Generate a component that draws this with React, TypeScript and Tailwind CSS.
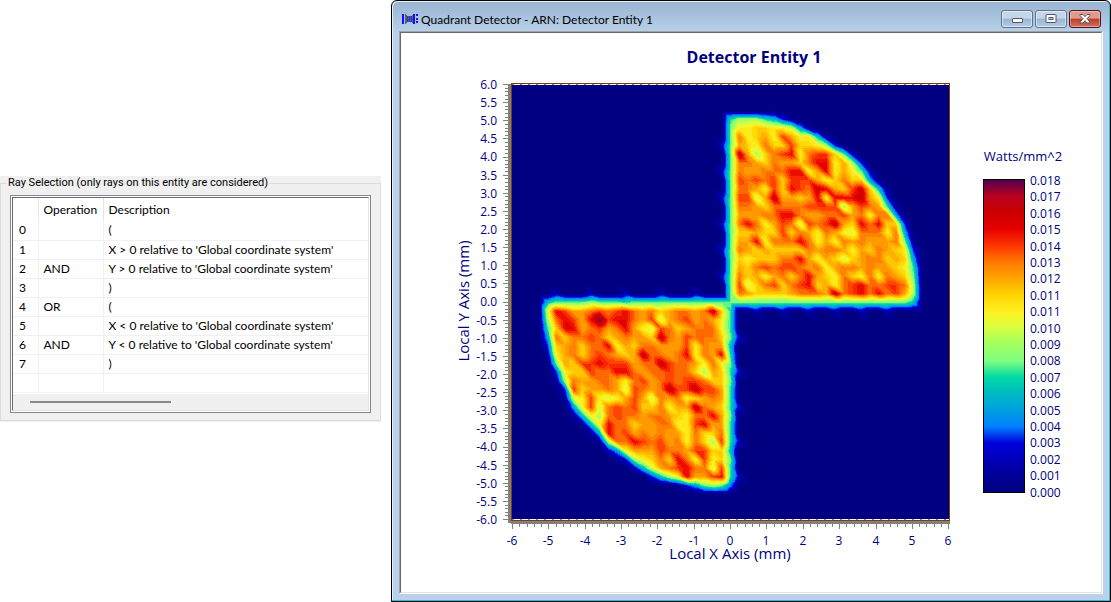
// Irradiance samples, one base-36 digit (0 to 19) per grid node.
// Rows run from the top edge of the quadrant down, columns left to right.
const UPPER_RIGHT = [
  "7999763100000000000000",
  "8bbccbba51000000000000",
  "8ebcdbfdbb610000000000",
  "8dcbeccfccb93000000000",
  "8hd9cefgbeffc820000000",
  "8eedceddceggbd93000000",
  "8eddeeeggbdgbdb8200000",
  "8fefefcfffdbcecc510000",
  "8eedbfcgfehgdcfhc61000",
  "8ffadhddcdgbggghdb3000",
  "8eedceeeeffff9dfed7100",
  "8dddeeggeddeefdebee500",
  "8egebdfeafefhdcgegcc30",
  "8ccdccfcedbedbaeeebe50",
  "8ddgbeeegebdbededdde81",
  "8edcdccccedeedbdcedcb3",
  "8cbccceegdbdcacdeecdc5",
  "8dcefeffedebdeededdcb7",
  "8ecdbdecegdcbecbebedc8",
  "8facefcefgcdbefgeeffe9",
  "8edccccdeeedhefgegefd9",
  "8888888888888888888886",
]

const LOWER_LEFT = [
  "6888898887888888888888",
  "agfddefefgedecdeedehc7",
  "9egfdgjfggedfadefdedb7",
  "7cggdefdegdbafecdeeeb7",
  "5eceefecdeddchedfeeec8",
  "3cdeceegbdceedddfbedd6",
  "1bdecefedcdheedegbedg7",
  "08dcffgfffdeehfeedbeb8",
  "03bccfeeggedeefeec9dc7",
  "019eddeedbefdefeffecc8",
  "003fcddedafedehffhffd7",
  "001abfbabdfdaedebcded7",
  "0005bfaefefccebddhedc7",
  "00016b9efeedeedcbeegd8",
  "000016bgeecddeebbfgdd7",
  "0000016gefdededdbecce7",
  "00000019eegfefdebec9f7",
  "000000025bdddfeedffcc6",
  "00000000139bcecgebfbc8",
  "000000000026adefgeeaf7",
  "000000000000369bgddfg7",
  "0000000000000001358984",
]

const PALETTE = [
  [0, 0, 128], [0, 0, 150], [0, 0, 184], [0, 0, 220], [0, 128, 255],
  [0, 160, 224], [0, 186, 196], [0, 216, 164], [128, 255, 128], [160, 255, 96],
  [216, 255, 64], [255, 240, 32], [255, 212, 0], [255, 164, 0], [255, 120, 0],
  [255, 52, 0], [230, 0, 0], [204, 0, 0], [184, 0, 32], [80, 0, 80],
]

const LEGEND_LABELS = [
  "0.018", "0.017", "0.016", "0.015", "0.014", "0.013", "0.012", "0.011", "0.011", "0.010",
  "0.009", "0.008", "0.007", "0.006", "0.005", "0.004", "0.003", "0.002", "0.001", "0.000",
]

const RAYS = [
  ["0", "", "("],
  ["1", "", "X > 0 relative to 'Global coordinate system'"],
  ["2", "AND", "Y > 0 relative to 'Global coordinate system'"],
  ["3", "", ")"],
  ["4", "OR", "("],
  ["5", "", "X < 0 relative to 'Global coordinate system'"],
  ["6", "AND", "Y < 0 relative to 'Global coordinate system'"],
  ["7", "", ")"],
  ["", "", ""],
]

// Plot rectangle inside the chart
const PLOT = { left: 111, top: 52, width: 437, height: 434 }
const CX = 329.6
const CY = 269.5
const NODE = 8.72
const BAND = 0.5

function color(value: number) {
  const v = Math.max(0, Math.min(19, value))
  const i = Math.min(18, Math.floor(v))
  const c = PALETTE[i].map((from, k) => Math.round(from + (PALETTE[i + 1][k] - from) * (v - i)))
  return `rgb(${c.join(",")})`
}

function sample(i: number, j: number) {
  if (i >= 0 && j >= 0) return parseInt(UPPER_RIGHT[21 - j]?.[i] ?? "0", 36)
  if (i <= 0 && j <= 0) return parseInt(LOWER_LEFT[-j]?.[21 + i] ?? "0", 36)
  // stray light just outside the straight edges
  if (i === -1 && j < 21) return j % 3 === 0 ? 2 : 0
  if (i === 1 && j > -21) return j % 4 === 0 ? 2 : 0
  if (j === -1 && i < 21) return i % 3 === 0 ? 2 : 0
  if (j === 1 && i > -21) return i % 4 === 0 ? 2 : 0
  return 0
}

type Node = [x: number, y: number, value: number]

// Part of the triangle that lies above the level
function clip(tri: Node[], level: number) {
  const out: string[] = []
  tri.forEach((a, n) => {
    const b = tri[(n + 1) % 3]
    if (a[2] >= level) out.push(`${a[0].toFixed(1)} ${a[1].toFixed(1)}`)
    if (a[2] >= level !== b[2] >= level) {
      const t = (level - a[2]) / (b[2] - a[2])
      out.push(`${(a[0] + (b[0] - a[0]) * t).toFixed(1)} ${(a[1] + (b[1] - a[1]) * t).toFixed(1)}`)
    }
  })
  return out.length > 2 ? `M${out.join("L")}Z` : ""
}

function buildBands() {
  const node = (i: number, j: number): Node => [CX + i * NODE, CY - j * NODE, sample(i, j)]
  const triangles: Node[][] = []
  for (let i = -23; i < 23; i++) {
    for (let j = -23; j < 23; j++) {
      const tl = node(i, j + 1)
      const br = node(i + 1, j)
      triangles.push([tl, node(i + 1, j + 1), br], [tl, br, node(i, j)])
    }
  }
  return Array.from({ length: 19 / BAND }, (_, n) => {
    const level = n === 0 ? 0.1 : n * BAND
    const d = triangles
      .filter((t) => Math.min(t[0][2], t[1][2], t[2][2]) < level + BAND)
      .map((t) => clip(t, level))
      .join("")
    return { d, fill: color(level + BAND / 2) }
  })
}

const BANDS = buildBands()

function range(count: number) {
  return Array.from({ length: count }, (_, i) => i)
}

function Chart() {
  const { left, top, width, height } = PLOT
  const right = left + width
  const bottom = top + height
  return (
    <svg viewBox="0 0 700 559" className="w-full" role="img" aria-label="Detector Entity 1" fill="#000080">
      <text x="353" y="30" textAnchor="middle" className="text-[16px] font-bold">Detector Entity 1</text>

      {/* Heat map */}
      <rect x={left} y={top} width={width} height={height} />
      <g shapeRendering="crispEdges">
        {BANDS.map((band, i) => (
          <path key={i} d={band.d} fill={band.fill} />
        ))}
      </g>
      <g shapeRendering="crispEdges" fill="none">
        <path d={`M${left} 51.5H${right}`} stroke="#fff" />
        <path d={`M${left} 51.5H${right}`} stroke="#808080" strokeDasharray="2 6" />
        <path d={`M${left} ${bottom + 0.5}H${right}`} stroke="#fff" />
        <path d={`M${left} ${bottom + 0.5}H${right}`} stroke="#808080" strokeDasharray="2 6" />
        <path d={`M${left - 0.5} 50.5H${right + 0.5}V${bottom + 1.5}H${left - 0.5}Z`} stroke="#804000" />
      </g>

      {/* Y axis */}
      <g fill="#808080" shapeRendering="crispEdges">
        <rect x="107" y="51" width="3" height="439" />
        {range(121).map((i) => (
          <rect key={i} x={i % 5 ? 104 : 102} y={Math.round(51 + i * 3.625)} width={i % 5 ? 3 : 5} height="1" />
        ))}
      </g>
      <g textAnchor="end" className="text-[12px]">
        {range(25).map((i) => (
          <text key={i} x="96" y={Math.round(56 + i * 18.12)}>{(6 - i / 2).toFixed(1)}</text>
        ))}
      </g>
      <text transform="translate(68 268) rotate(-90)" textAnchor="middle" className="text-[15px]">Local Y Axis (mm)</text>

      {/* X axis */}
      <g fill="#808080" shapeRendering="crispEdges">
        <rect x="110" y="488" width="439" height="3" />
        {range(61).map((i) => (
          <rect key={i} x={Math.round(111 + i * 7.27)} y="491" width="1" height={i % 5 ? 3 : 5} />
        ))}
      </g>
      <g textAnchor="middle" className="text-[12px]">
        {range(13).map((i) => (
          <text key={i} x={Math.round(111 + i * 36.35)} y="512">{i - 6}</text>
        ))}
      </g>
      <text x="329" y="526" textAnchor="middle" className="text-[15px]">Local X Axis (mm)</text>

      {/* Legend */}
      <linearGradient id="scale" x1="0" y1="1" x2="0" y2="0">
        {PALETTE.map((_, i) => (
          <stop key={i} offset={i / 19} stopColor={color(i)} />
        ))}
      </linearGradient>
      <text x="622" y="128" textAnchor="middle" className="text-[13px]">Watts/mm^2</text>
      <rect x="582.5" y="146.5" width="41" height="313" fill="url(#scale)" stroke="#000" />
      <g className="text-[12px]">
        {LEGEND_LABELS.map((label, i) => (
          <text key={i} x="629" y={Math.round(152 + i * 16.4)}>{label}</text>
        ))}
      </g>
    </svg>
  )
}

function RaySelection() {
  return (
    <section className="mt-44 w-[381px] shrink-0 bg-[#f0f0f0] pb-px font-['Lato','Open_Sans',sans-serif] text-[12px] text-black">
      <fieldset className="border border-[#dcdcdc] px-[9px] pb-[7px]">
        <legend className="-ml-[3px] px-px font-['Roboto','Open_Sans',sans-serif] text-[11px] leading-[14px]">
          Ray Selection (only rays on this entity are considered)
        </legend>
        <div className="mt-[5px] border border-[#828790] bg-white p-px">
          <div className="border border-t-[#696969] border-r-[#e3e3e3] border-b-[#e3e3e3] border-l-[#696969]">
            <table className="w-full table-fixed border-collapse text-left">
              <colgroup>
                <col className="w-[25px]" />
                <col className="w-[65px]" />
                <col />
              </colgroup>
              <thead>
                <tr className="h-[23px]">
                  <td className="border-r border-[#e5e5e5]" />
                  <th className="border-r border-[#e5e5e5] pl-[5px] font-normal">Operation</th>
                  <th className="pl-[5px] font-normal">Description</th>
                </tr>
              </thead>
              <tbody>
                {RAYS.map(([index, operation, description], i) => (
                  <tr key={i} className="h-[19px] border-b border-[#f0f0f0] leading-[18px]">
                    <td className="border-r border-[#f0f0f0] pl-1.5">{index}</td>
                    <td className="border-r border-[#f0f0f0] pl-[5px]">{operation}</td>
                    <td className="pl-[5px] whitespace-nowrap">{description}</td>
                  </tr>
                ))}
              </tbody>
            </table>
            <div className="mt-px flex h-4 items-center bg-[#f0f0f0] pl-[17px]">
              <div className="h-0.5 w-[141px] bg-[#868a86]" />
            </div>
          </div>
        </div>
      </fieldset>
    </section>
  )
}

const CAPTION_BUTTON =
  "flex h-[18px] w-[32px] items-center justify-center rounded-[3px] border border-[#5d7391] bg-linear-to-b from-[#c3d6ea] from-45% via-[#9ab5d0] via-50% to-[#b4cde6] shadow-[inset_0_0_0_1px_rgba(255,255,255,0.5)]"

function DetectorWindow() {
  return (
    <section className="flex min-w-0 flex-1 flex-col rounded-t-[6px] border border-black bg-[#b9d1ea] bg-linear-to-b from-[#99b4d1] to-[#b9d1ea] to-[32px] shadow-[inset_-1px_-1px_0_#22c4dc,inset_1px_1px_0_#e6eff8] px-[7px] pb-[7px]">
      <header className="flex h-[30px] items-center pt-1.5 pl-[3px]">
        <svg viewBox="0 0 16 12" className="mr-[3px] h-3 w-4" shapeRendering="crispEdges" aria-hidden="true">
          <path d="M0 1h2v10H0zM11 1h2v10h-2zM14 1h2v2h-2zM14 5h2v2h-2zM14 8h2v2h-2z" fill="#1010ff" />
          <path d="M3 1h1v10H3zM4 2h1v8H4zM6 3h1v6H6zM8 3h1v6H8zM10 2h1v8h-1z" fill="#5a5a78" />
          <path d="M5 3h1v6H5zM7 3h1v6H7zM9 3h1v6H9z" fill="#2038c8" />
        </svg>
        <h1 className="min-w-0 flex-1 truncate pt-0.5 font-['Lato','Open_Sans',sans-serif] text-[12px] text-black">
          Quadrant Detector - ARN: Detector Entity 1
        </h1>
        <div className="mr-0.5 flex gap-0.5">
          <button type="button" aria-label="Minimize" className={CAPTION_BUTTON}>
            <svg viewBox="0 0 12 10" className="h-2.5 w-3">
              <rect x="1.5" y="4.5" width="10" height="4" rx="0.5" fill="#fff" stroke="#535666" />
            </svg>
          </button>
          <button type="button" aria-label="Maximize" className={CAPTION_BUTTON}>
            <svg viewBox="0 0 12 10" className="h-2.5 w-3">
              <rect x="1" y="0.5" width="10" height="8" rx="0.5" fill="#fff" stroke="#535666" />
              <rect x="4" y="3.5" width="4" height="2" fill="#a8c0da" stroke="#535666" />
            </svg>
          </button>
          <button
            type="button"
            aria-label="Close"
            className="flex h-[18px] w-[32px] items-center justify-center rounded-[3px] border border-[#4a1420] bg-linear-to-b from-[#e09a8c] from-45% via-[#bd3c26] via-50% to-[#d4705c] shadow-[inset_0_0_0_1px_rgba(255,255,255,0.35)]"
          >
            <svg viewBox="0 0 12 10" className="h-2.5 w-3">
              <path
                d="M1 0.5H4L6 2.7 8 0.5H11V1.5L8 4.7 11 8V9H8L6 6.7 4 9H1V8L4 4.7 1 1.5Z"
                fill="#fff"
                stroke="#535666"
              />
            </svg>
          </button>
        </div>
      </header>
      <main className="flex-1 border border-t-[#a0a0a0] border-r-white border-b-white border-l-[#a0a0a0]">
        <div className="h-full border border-t-[#696969] border-r-[#e3e3e3] border-b-[#e3e3e3] border-l-[#696969] bg-white">
          <Chart />
        </div>
      </main>
    </section>
  )
}

export default function App() {
  return (
    <div className="flex min-h-screen items-stretch gap-2.5 bg-white font-['Open_Sans','Noto_Sans',sans-serif]">
      <div>
        <RaySelection />
      </div>
      <DetectorWindow />
    </div>
  )
}
